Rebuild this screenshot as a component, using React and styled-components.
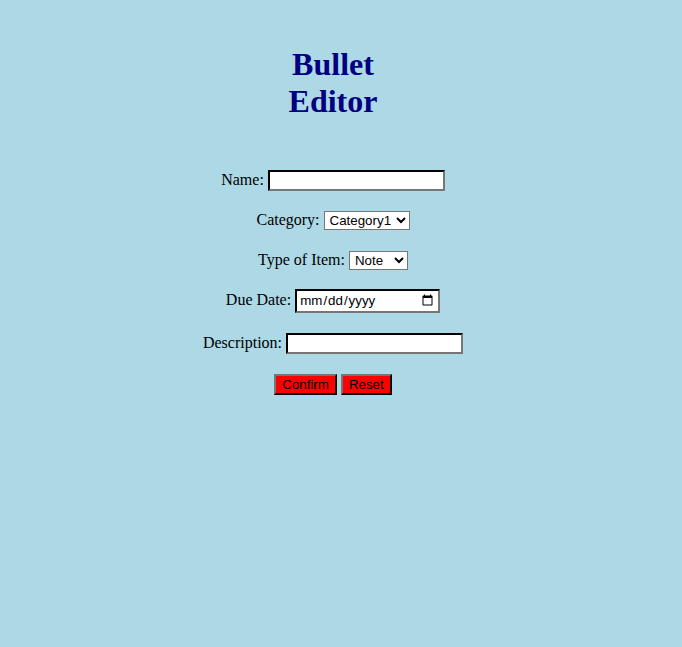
import React from "react";
import styled, { createGlobalStyle } from "styled-components";

const Global = createGlobalStyle`
  html, body { background: lightblue; }
  body { margin: 8px; font-family: "Liberation Serif", "Times New Roman", serif; font-size: 16px; color: #000; }
`;

const Page = styled.div`
  width: 650px;
  padding-top: 17px;
  text-align: center;
`;

const Title = styled.h1`
  width: 120px;
  margin: 21px auto 0;
  color: navy;
  font-size: 32px;
  font-weight: bold;
  line-height: 37px;
`;

const Form = styled.form`
  margin-top: 48px;
`;

const Row = styled.div`
  margin: 0 0 ${(p) => p.$gap || 16}px;
  line-height: 24px;
`;

const Label = styled.label`
  margin-right: 4px;
`;

const TextInput = styled.input`
  font-family: "Liberation Sans", Arial, sans-serif;
  font-size: 13.33px;
  width: 177px;
  height: 21px;
  box-sizing: border-box;
  padding: 1px 2px;
  border: 2px inset #767676;
  border-top-color: #1f1f1f;
  border-left-color: #1f1f1f;
  background: #fff;
  vertical-align: baseline;
`;

const DateInput = styled(TextInput)`
  width: 145px;
  height: 24px;
`;

const Select = styled.select`
  font-family: "Liberation Sans", Arial, sans-serif;
  font-size: 13.33px;
  height: 19px;
  width: ${(p) => p.$w}px;
  border: 1px solid #767676;
  background: #fff;
  color: #000;
  padding: 0 0 0 1px;
  border-radius: 0;
`;

const Button = styled.button`
  font-family: "Liberation Sans", Arial, sans-serif;
  font-size: 13.33px;
  background: red;
  color: #000;
  height: 21px;
  padding: 1px 6px;
  border: 2px outset #767676;
  border-right-color: #1f1f1f;
  border-bottom-color: #1f1f1f;
  margin: 0 2px;
`;

export default function App() {
  return (
    <>
      <Global />
      <Page>
        <Title>Bullet Editor</Title>
        <Form onSubmit={(e) => e.preventDefault()}>
          <Row>
            <Label>Name:</Label>
            <TextInput type="text" />
          </Row>
          <Row $gap={16}>
            <Label>Category:</Label>
            <Select $w={86}>
              <option>Category1</option>
              <option>Category2</option>
            </Select>
          </Row>
          <Row $gap={16}>
            <Label>Type of Item:</Label>
            <Select $w={59}>
              <option>Note</option>
              <option>Task</option>
              <option>Event</option>
            </Select>
          </Row>
          <Row $gap={18}>
            <Label>Due Date:</Label>
            <DateInput type="date" />
          </Row>
          <Row $gap={17}>
            <Label>Description:</Label>
            <TextInput type="text" />
          </Row>
          <Row>
            <Button type="submit">Confirm</Button>
            <Button type="reset">Reset</Button>
          </Row>
        </Form>
      </Page>
    </>
  );
}
